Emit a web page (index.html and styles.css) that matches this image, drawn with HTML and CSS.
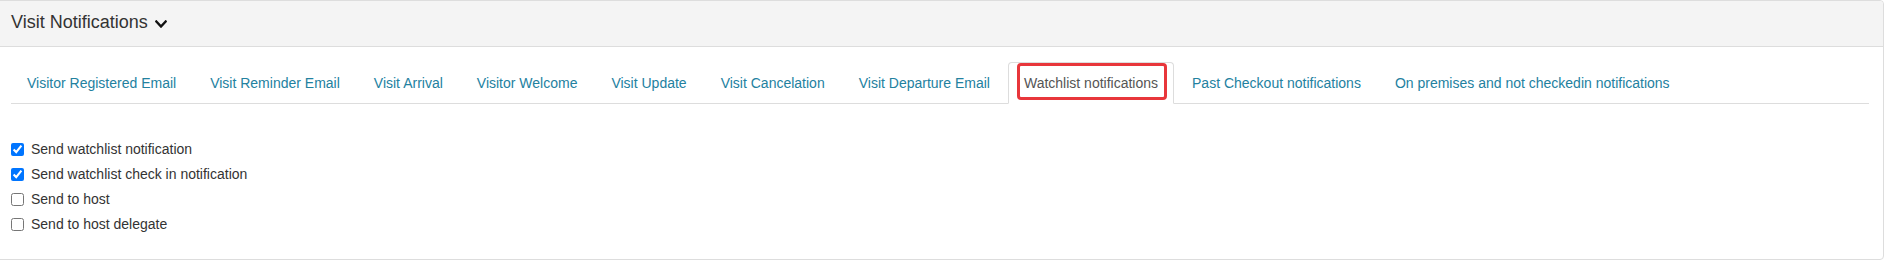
FILE: index.html
```html
<!DOCTYPE html>
<html lang="en">
<head>
  <meta charset="UTF-8" />
  <title>Visit Notifications</title>
  <link rel="stylesheet" href="styles.css">
</head>
<body>
  <div class="panel">
    <div class="panel-heading">
      <span class="panel-title">Visit Notifications</span>
      <svg class="chevron" viewBox="5 123 438 266" preserveAspectRatio="none" width="12" height="8">
        <path d="M207.029 381.476L12.686 187.132c-9.373-9.373-9.373-24.569 0-33.941l22.667-22.667c9.357-9.357 24.522-9.375 33.901-.04L224 284.505l154.745-154.021c9.379-9.335 24.544-9.317 33.901.04l22.667 22.667c9.373 9.373 9.373 24.569 0 33.941L240.971 381.476c-9.373 9.372-24.569 9.372-33.942 0z" fill="#111"/>
      </svg>
    </div>

    <div class="panel-body">
      <ul class="nav-tabs">
        <li><a href="#">Visitor Registered Email</a></li>
        <li><a href="#">Visit Reminder Email</a></li>
        <li><a href="#">Visit Arrival</a></li>
        <li><a href="#">Visitor Welcome</a></li>
        <li><a href="#">Visit Update</a></li>
        <li><a href="#">Visit Cancelation</a></li>
        <li><a href="#">Visit Departure Email</a></li>
        <li class="active"><a href="#">Watchlist notifications</a><span class="highlight"></span></li>
        <li><a href="#">Past Checkout notifications</a></li>
        <li><a href="#">On premises and not checkedin notifications</a></li>
      </ul>

      <div class="tab-content">
        <label class="check"><input type="checkbox" checked> Send watchlist notification</label>
        <label class="check"><input type="checkbox" checked> Send watchlist check in notification</label>
        <label class="check"><input type="checkbox"> Send to host</label>
        <label class="check"><input type="checkbox"> Send to host delegate</label>
      </div>
    </div>
  </div>
</body>
</html>
```

FILE: styles.css
```css
body {
  font-family: "Liberation Sans", Arial, sans-serif;
  font-size: 14px;
  color: #333;
  background-color: #fff;
  margin: 0;
}
.panel {
  margin: 0 4px 0 -5px;
  border: 1px solid #ddd;
  border-radius: 4px;
  background: #fff;
}
.panel-heading {
  display: flex;
  align-items: center;
  gap: 7px;
  padding: 11px 15px 13px;
  background-color: #f4f4f4;
  border-bottom: 1px solid #ddd;
  border-radius: 4px 4px 0 0;
}
.panel-title {
  font-size: 18px;
  line-height: 21px;
  color: #333;
}
.chevron {
  margin-top: 2px;
}
.panel-body {
  padding: 15px 14px 15px 15px;
}
.nav-tabs {
  display: flex;
  list-style: none;
  margin: 0;
  padding: 0;
  border-bottom: 1px solid #ddd;
}
.nav-tabs li {
  position: relative;
  margin-right: 2px;
  margin-bottom: -1px;
}
.nav-tabs a {
  display: block;
  padding: 10px 15px;
  line-height: 20px;
  border: 1px solid transparent;
  border-radius: 4px 4px 0 0;
  color: #23819f;
  text-decoration: none;
  white-space: nowrap;
}
.nav-tabs .active a {
  color: #555;
  background-color: #fff;
  border-color: #ddd #ddd transparent;
}
.highlight {
  position: absolute;
  top: 1px;
  left: 9px;
  right: 7px;
  bottom: 4px;
  border: 3px solid #e8363b;
  border-radius: 4px;
  pointer-events: none;
}
.tab-content {
  display: flex;
  flex-direction: column;
  gap: 5px;
  padding: 35px 0 10px;
}
.check {
  display: flex;
  align-items: center;
  line-height: 20px;
  color: #333;
}
.check input {
  width: 13px;
  height: 13px;
  margin: 1px 7px 0 0;
}
```
